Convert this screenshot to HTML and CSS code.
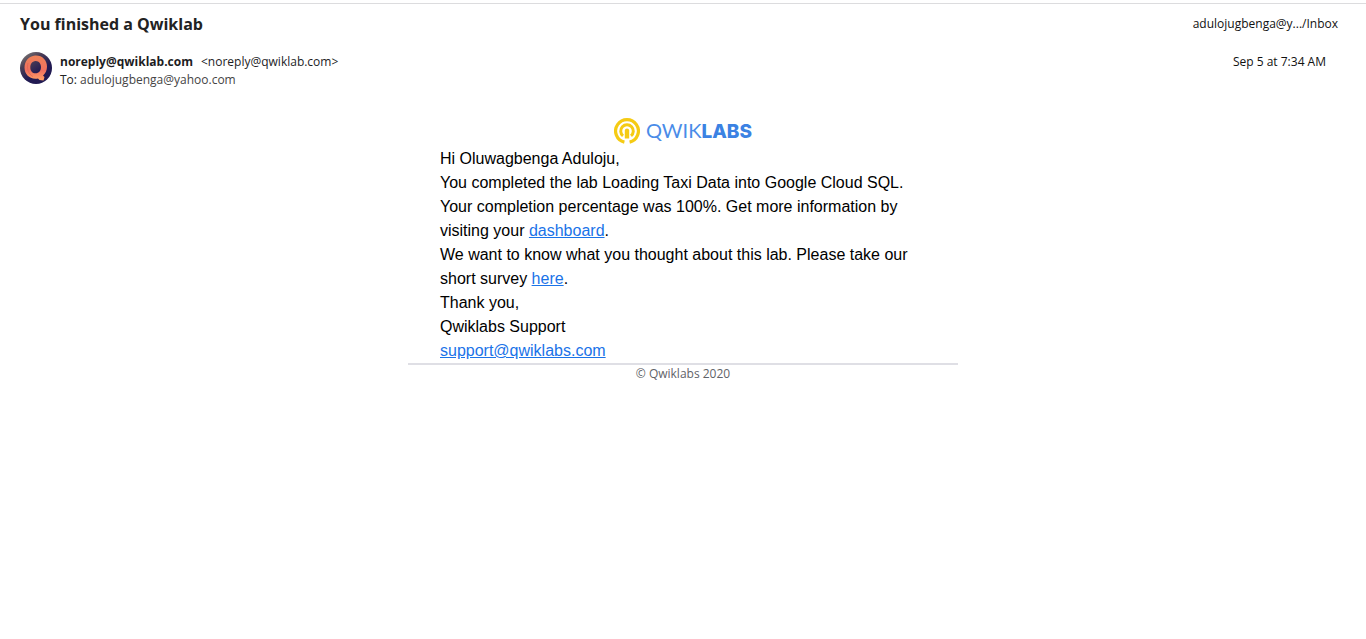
FILE: index.html
```html
<!DOCTYPE html>
<html lang="en">
<head>
<meta charset="utf-8">
<title>You finished a Qwiklab</title>
<link rel="stylesheet" href="styles.css">
</head>
<body>
<main class="message">
  <header class="subject-bar">
    <h1 class="subject">You finished a Qwiklab</h1>
    <span class="folder">adulojugbenga@y.../Inbox</span>
  </header>
  <section class="sender-bar">
    <svg class="avatar" viewBox="0 0 32 32" role="img" aria-label="Sender avatar">
      <defs>
        <linearGradient id="night" x1="0" y1="0" x2="0.7" y2="1">
          <stop offset="0" stop-color="#8b8a80"/>
          <stop offset="0.35" stop-color="#4b3e55"/>
          <stop offset="0.7" stop-color="#211a52"/>
          <stop offset="1" stop-color="#211a52"/>
        </linearGradient>
        <linearGradient id="glow" x1="0" y1="0" x2="0" y2="1">
          <stop offset="0" stop-color="#ee8258"/>
          <stop offset="0.6" stop-color="#f0705f"/>
          <stop offset="1" stop-color="#ffa267"/>
        </linearGradient>
      </defs>
      <circle cx="16" cy="16" r="16" fill="url(#night)"/>
      <path fill="url(#glow)" fill-rule="evenodd" d="M15 3.500C22 3 27 8 27 14.500C27 18.500 25.500 21.500 23 23.500L24.500 25L23.500 28.500L19.500 28L18 26.500C10 28 4.500 22.500 4.500 15.500C4.500 9 9 4 15 3.500ZM15.500 9C12 9.300 10.300 12 10.300 15.500C10.300 19 12.500 21.300 15.500 21.300C19 21.300 21 18.500 21 15C21 11.800 18.800 8.800 15.500 9Z"/>
      <path fill="none" stroke="#dc5f52" stroke-width="1" stroke-opacity="0.6" d="M8 11C6.500 16 8 22 13 24.500"/>
    </svg>
    <div class="addresses">
      <div class="from"><strong class="from-name">noreply@qwiklab.com</strong><span>&lt;noreply@qwiklab.com&gt;</span></div>
      <div class="to">To: <span class="to-address">adulojugbenga@yahoo.com</span></div>
    </div>
    <time class="date">Sep 5 at 7:34 AM</time>
  </section>
  <article class="mail">
    <div class="brand">
      <svg class="brand-mark" viewBox="0 0 26 26" aria-hidden="true">
        <path fill="none" stroke="#f5cb14" stroke-width="3.200" d="M10.400 24.100A11.400 11.400 0 1 1 15.600 24.100"/>
        <path fill="none" stroke="#f5cb14" stroke-width="3" d="M9 17.900A6.300 6.300 0 1 1 17 17.900"/>
        <path fill="#f5cb14" d="M10.800 12.500Q10.800 10.500 13 10.500Q15.200 10.500 15.200 12.500V20.500H10.800Z"/>
      </svg>
      <span class="brand-name">QWIK<b class="brand-bold">LABS</b></span>
    </div>
    <div class="mail-body">
      <p>Hi Oluwagbenga Aduloju,</p>
      <p>You completed the lab Loading Taxi Data into Google Cloud SQL. Your completion percentage was 100%. Get more information by visiting your <a href="#dashboard">dashboard</a>.</p>
      <p>We want to know what you thought about this lab. Please take our short survey <a href="#survey">here</a>.</p>
      <p>Thank you,</p>
      <p>Qwiklabs Support</p>
      <p><a href="mailto:support@qwiklabs.com">support@qwiklabs.com</a></p>
    </div>
    <footer class="mail-footer">© Qwiklabs 2020</footer>
  </article>
</main>
</body>
</html>
```
FILE: styles.css
```css
* { box-sizing: border-box; }

body {
  margin: 0;
  background: #fff;
  color: #232a31;
  font-family: "Segoe UI", "Open Sans", "Noto Sans", sans-serif;
  font-size: 12px;
  line-height: 18px;
}

.message {
  margin-top: 3px;
  border-top: 1px solid #dcdcde;
}

.subject-bar {
  display: flex;
  justify-content: space-between;
  align-items: center;
  height: 40px;
  padding: 0 28px 0 20px;
}

.subject {
  margin: 0;
  font-size: 16px;
  line-height: 24px;
  font-weight: 700;
  color: #222;
}

.folder { color: #111; }

.sender-bar {
  display: flex;
  align-items: flex-start;
  gap: 8px;
  padding: 8px 40px 0 20px;
}

.avatar { width: 32px; height: 32px; }

.addresses {
  flex: 1;
  padding-top: 1px;
}

.from {
  display: flex;
  gap: 8px;
  color: #1d1d1f;
}

.from-name { font-weight: 700; }

.to { color: #222; }

.to-address { color: #444; }

.date {
  padding-top: 1px;
  color: #111;
}

.mail {
  max-width: 550px;
  margin: 29px auto 0;
  font-family: "Liberation Sans", Arial, sans-serif;
}

.brand {
  display: flex;
  justify-content: center;
  align-items: center;
  gap: 6px;
  height: 26px;
}

.brand-mark { width: 26px; height: 26px; }

.brand-name {
  font-family: Lato, sans-serif;
  font-size: 20px;
  line-height: 24px;
  font-weight: 400;
  color: #4a8ce8;
}

.brand-bold {
  font-family: Inter, sans-serif;
  font-size: 19px;
  font-weight: 800;
  color: #3b82e3;
}

.mail-body {
  padding: 3px 32px 0;
  font-size: 16px;
  line-height: 24px;
  color: #000;
}

.mail-body p { margin: 0; }

.mail-body a { color: #1a73e8; }

.mail-footer {
  border-top: 2px solid #dfdfe5;
  text-align: center;
  font-family: "Segoe UI", "Open Sans", "Noto Sans", sans-serif;
  font-size: 12px;
  line-height: 18px;
  color: #5f6368;
}
```
